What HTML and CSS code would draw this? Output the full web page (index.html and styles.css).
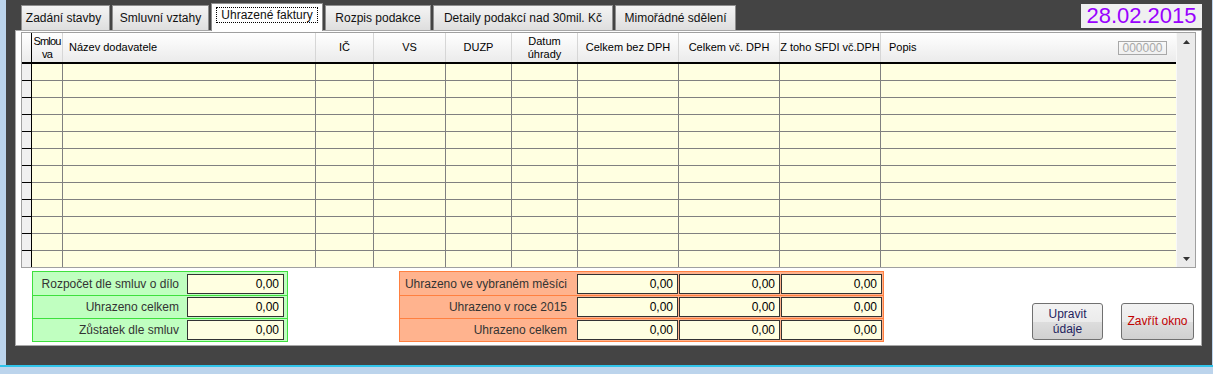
FILE: index.html
```html
<!DOCTYPE html>
<html lang="cs">
<head>
    <meta charset="UTF-8">
    <title>Uhrazené faktury</title>
    <link rel="stylesheet" href="styles.css">
</head>
<body>
    <div class="frame">
        <div class="tabbar">
            <div class="tab">Zadání stavby</div>
            <div class="tab">Smluvní vztahy</div>
            <div class="tab active"><span>Uhrazené faktury</span></div>
            <div class="tab">Rozpis podakce</div>
            <div class="tab">Detaily podakcí nad 30mil. Kč</div>
            <div class="tab">Mimořádné sdělení</div>
            <div class="date">28.02.2015</div>
        </div>

        <div class="panel">
            <div class="grid">
                <div class="table">
                    <div class="row head">
                        <span></span>
                        <span class="narrow">Smlou<br>va</span>
                        <span class="left">Název dodavatele</span>
                        <span>IČ</span>
                        <span>VS</span>
                        <span>DUZP</span>
                        <span>Datum<br>úhrady</span>
                        <span>Celkem bez DPH</span>
                        <span>Celkem vč. DPH</span>
                        <span>Z toho SFDI vč.DPH</span>
                        <span class="left popis">Popis <em class="counter">000000</em></span>
                    </div>
                    <div class="row line"><span></span><span></span><span></span><span></span><span></span><span></span><span></span><span></span><span></span><span></span><span></span></div>
                    <div class="row line"><span></span><span></span><span></span><span></span><span></span><span></span><span></span><span></span><span></span><span></span><span></span></div>
                    <div class="row line"><span></span><span></span><span></span><span></span><span></span><span></span><span></span><span></span><span></span><span></span><span></span></div>
                    <div class="row line"><span></span><span></span><span></span><span></span><span></span><span></span><span></span><span></span><span></span><span></span><span></span></div>
                    <div class="row line"><span></span><span></span><span></span><span></span><span></span><span></span><span></span><span></span><span></span><span></span><span></span></div>
                    <div class="row line"><span></span><span></span><span></span><span></span><span></span><span></span><span></span><span></span><span></span><span></span><span></span></div>
                    <div class="row line"><span></span><span></span><span></span><span></span><span></span><span></span><span></span><span></span><span></span><span></span><span></span></div>
                    <div class="row line"><span></span><span></span><span></span><span></span><span></span><span></span><span></span><span></span><span></span><span></span><span></span></div>
                    <div class="row line"><span></span><span></span><span></span><span></span><span></span><span></span><span></span><span></span><span></span><span></span><span></span></div>
                    <div class="row line"><span></span><span></span><span></span><span></span><span></span><span></span><span></span><span></span><span></span><span></span><span></span></div>
                    <div class="row line"><span></span><span></span><span></span><span></span><span></span><span></span><span></span><span></span><span></span><span></span><span></span></div>
                    <div class="row line"><span></span><span></span><span></span><span></span><span></span><span></span><span></span><span></span><span></span><span></span><span></span></div>
                </div>
                <div class="scroll">
                    <svg width="7" height="4" viewBox="0 0 7 4"><polygon points="0,4 3.5,0 7,4" fill="#333"/></svg>
                    <svg width="7" height="4" viewBox="0 0 7 4"><polygon points="0,0 7,0 3.5,4" fill="#333"/></svg>
                </div>
            </div>

            <div class="summary">
                <div class="sum green">
                    <div class="sum-row"><span class="label">Rozpočet dle smluv o dílo</span><span class="val">0,00</span></div>
                    <div class="sum-row"><span class="label">Uhrazeno celkem</span><span class="val">0,00</span></div>
                    <div class="sum-row"><span class="label">Zůstatek dle smluv</span><span class="val">0,00</span></div>
                </div>
                <div class="sum orange">
                    <div class="sum-row"><span class="label">Uhrazeno ve vybraném měsíci</span><span class="val">0,00</span><span class="val">0,00</span><span class="val">0,00</span></div>
                    <div class="sum-row"><span class="label">Uhrazeno v roce 2015</span><span class="val">0,00</span><span class="val">0,00</span><span class="val">0,00</span></div>
                    <div class="sum-row"><span class="label">Uhrazeno celkem</span><span class="val">0,00</span><span class="val">0,00</span><span class="val">0,00</span></div>
                </div>
                <button class="btn edit">Upravit<br>údaje</button>
                <button class="btn close">Zavřít okno</button>
            </div>
        </div>
    </div>
    <div class="edge"></div>
</body>
</html>
```

FILE: styles.css
```css
* {
    box-sizing: border-box;
}
body {
    margin: 0;
    background-color: #bcd4ec;
    font-family: 'Liberation Sans', Arial, sans-serif;
    font-size: 12px;
    color: #222;
}
.frame {
    margin-left: 6px;
    width: 1206px;
    height: 365px;
    background-color: #444444;
    padding: 0 10px 0 9px;
}
.edge {
    height: 2px;
    background-color: #30c4ea;
}

/* tabs */
.tabbar {
    height: 30px;
    display: flex;
    align-items: flex-end;
    padding-left: 6px;
}
.tab {
    height: 25px;
    margin-right: 2px;
    border: 1px solid #8e8e8e;
    border-bottom: none;
    background: linear-gradient(#f4f4f4, #dedede);
    display: flex;
    align-items: center;
    justify-content: center;
    color: #111;
    white-space: nowrap;
}
.tab:nth-child(1) { width: 89px; padding-right: 4px; }
.tab:nth-child(2) { width: 97px; }
.tab:nth-child(3) { width: 112px; }
.tab:nth-child(4) { width: 106px; }
.tab:nth-child(5) { width: 180px; }
.tab:nth-child(6) { width: 121px; }
.tab.active {
    height: 28px;
    margin-bottom: -1px;
    background: #fff;
    position: relative;
    align-items: flex-start;
    padding-top: 4px;
}
.tab.active span {
    outline: 1px dotted #000;
    padding: 1px 4px;
    line-height: 12px;
}
.date {
    margin-left: auto;
    align-self: flex-start;
    margin-top: 4px;
    width: 121px;
    height: 24px;
    background-color: #f0f0f0;
    color: #9900ff;
    font-size: 22px;
    line-height: 24px;
    text-align: center;
}

/* main panel */
.panel {
    height: 316px;
    background-color: #fff;
    border: 1px solid #a8a8a8;
    padding: 1px 5px 0;
}
.grid {
    display: flex;
    height: 236px;
    border: 1px solid #a0a0a0;
}
.table {
    width: 1154px;
}
.row {
    display: grid;
    grid-template-columns: 10px 31px 253px 58px 72px 66px 66px 101px 101px 101px 295px;
}
.head {
    height: 31px;
    border-bottom: 2px solid #000;
    background: linear-gradient(#ffffff, #ebebeb);
}
.head span {
    border-right: 1px solid #d6d6d6;
    display: flex;
    align-items: center;
    justify-content: center;
    text-align: center;
    font-size: 11px;
    line-height: 13px;
    color: #000;
    white-space: nowrap;
    overflow: hidden;
}
.head span:first-child {
    border-right-color: #000;
}
.head span:last-child {
    border-right: none;
}
.head .narrow {
    letter-spacing: -0.8px;
}
.head .left {
    justify-content: flex-start;
    padding-left: 6px;
}
.head .popis {
    justify-content: space-between;
    padding: 0 9px 0 8px;
}
.counter {
    font-style: normal;
    width: 49px;
    height: 14px;
    border: 1px solid #a8a8a8;
    color: #a8a8a8;
    font-size: 12px;
    line-height: 12px;
    text-align: center;
}
.line {
    height: 17px;
}
.line span {
    background-color: #ffffe1;
    border-right: 1px solid #808080;
    border-bottom: 1px solid #808080;
}
.line span:first-child {
    background-color: #f0f0f0;
    border-color: #000;
}
.line span:last-child {
    border-right: none;
}
.line:last-child {
    height: 16px;
}
.line:last-child span {
    border-bottom: none;
}
.scroll {
    flex: 1;
    background-color: #ebebeb;
    border-left: 1px solid #f8f8f8;
    display: flex;
    flex-direction: column;
    justify-content: space-between;
    align-items: center;
    padding: 7px 0 6px;
}

/* totals */
.summary {
    display: flex;
    align-items: flex-start;
    margin-top: 3px;
    padding-left: 11px;
}
.sum {
    border: 1px solid;
}
.green {
    width: 256px;
    background-color: #c0ffc0;
    border-color: #3ee03e;
}
.orange {
    width: 485px;
    margin-left: 111px;
    background-color: #ffb38e;
    border-color: #ff8040;
}
.sum-row {
    display: flex;
    align-items: center;
    height: 23px;
}
.green .sum-row + .sum-row {
    border-top: 1px solid #3ee03e;
}
.orange .sum-row + .sum-row {
    border-top: 1px solid #ff8040;
}
.label {
    flex: 1;
    text-align: right;
    color: #333;
    white-space: nowrap;
}
.green .label {
    padding-right: 8px;
}
.orange .label {
    padding-right: 10px;
}
.val {
    height: 20px;
    border: 1px solid #333;
    background-color: #ffffe1;
    text-align: right;
    padding-right: 4px;
    line-height: 18px;
    color: #000;
}
.green .val {
    width: 97px;
    margin-right: 3px;
}
.orange .val {
    width: 101px;
    margin-right: 1px;
}

/* buttons */
.btn {
    margin-top: 32px;
    height: 37px;
    border: 1px solid #707070;
    border-radius: 3px;
    background: linear-gradient(#f2f2f2 0%, #ebebeb 50%, #dddddd 51%, #d0d0d0 100%);
    font-family: 'Liberation Sans', Arial, sans-serif;
    font-size: 12px;
    line-height: 15px;
    padding: 0;
    cursor: pointer;
}
.edit {
    width: 71px;
    margin-left: 148px;
    color: #1e1e5e;
}
.close {
    width: 73px;
    margin-left: 18px;
    color: #c00000;
}
```
